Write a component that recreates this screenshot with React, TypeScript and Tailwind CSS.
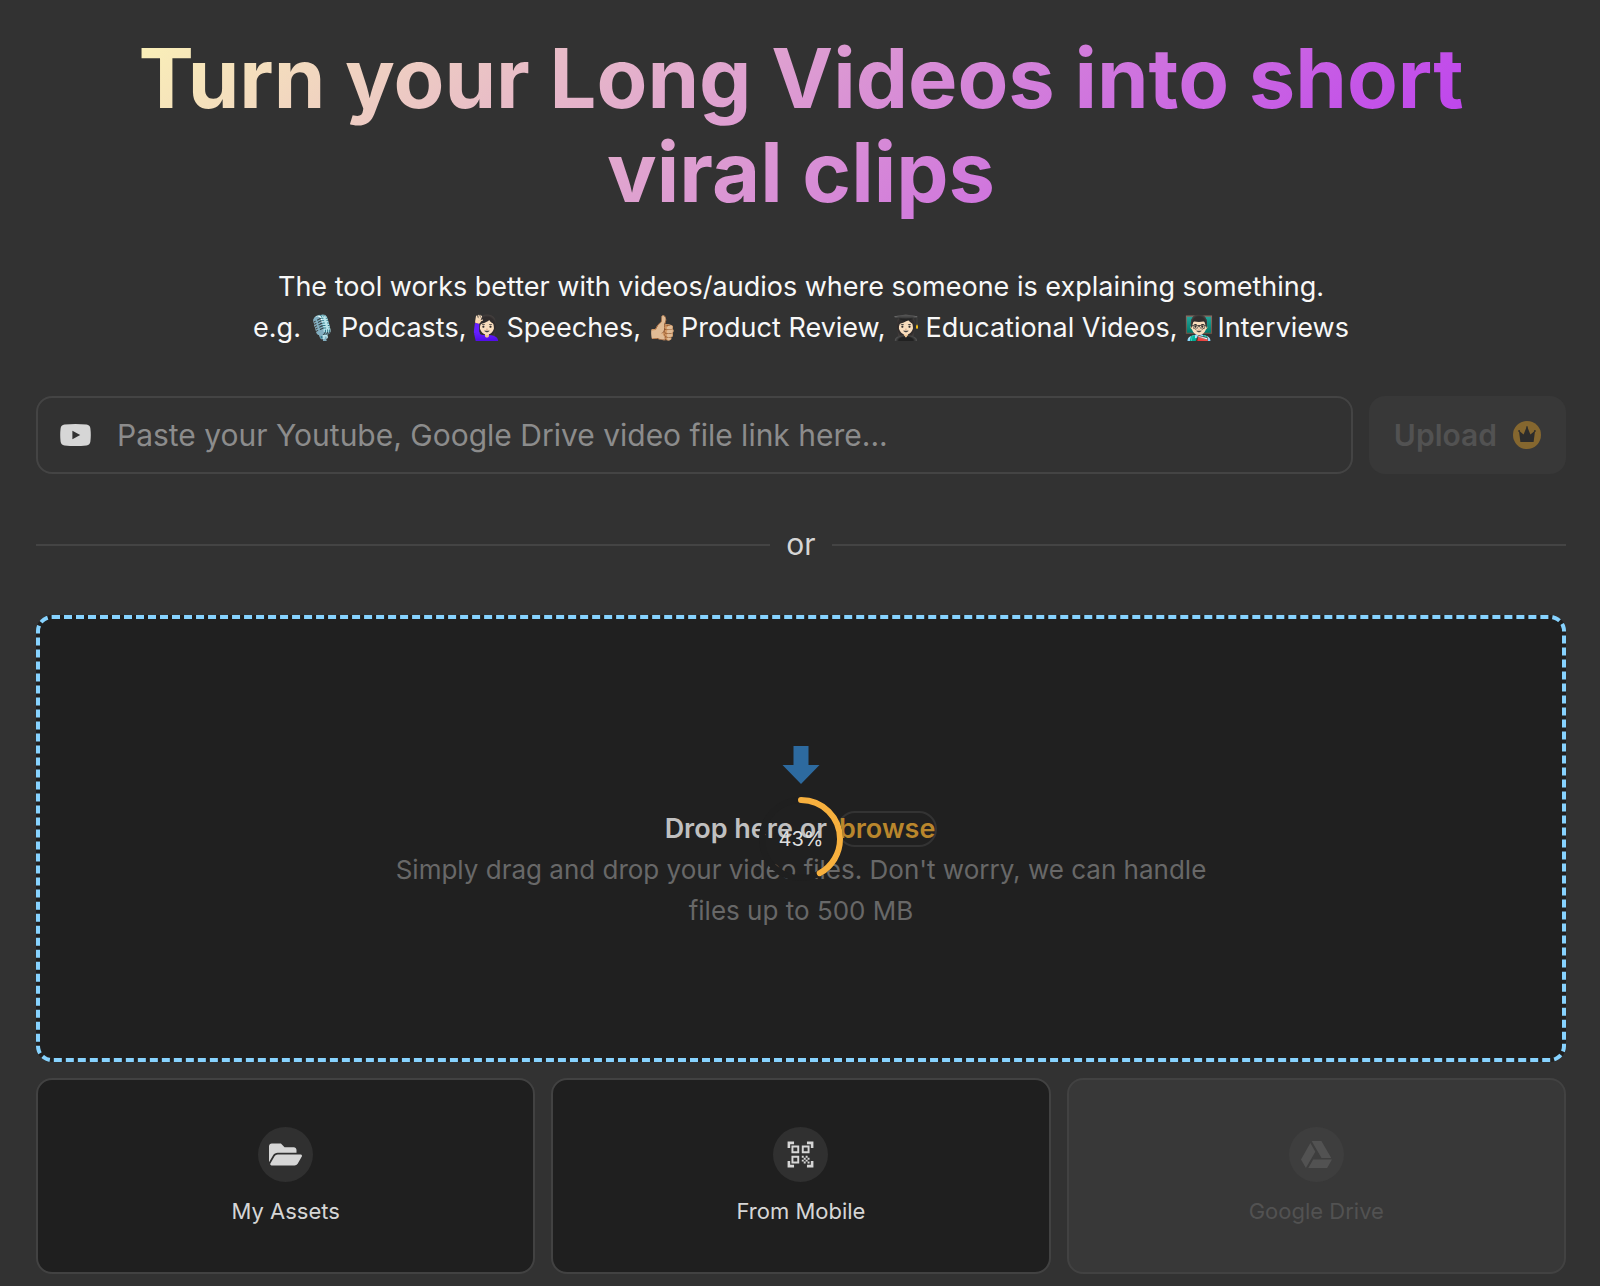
import clsx from "clsx";
import { FaFolderOpen, FaGoogleDrive } from "react-icons/fa";
import { MdQrCodeScanner } from "react-icons/md";

const examples = [
  { emoji: "🎙️", label: "Podcasts," },
  { emoji: "🙋🏻‍♀️", label: "Speeches," },
  { emoji: "👍🏼", label: "Product Review," },
  { emoji: "👩🏻‍🎓", label: "Educational Videos," },
  { emoji: "👨🏻‍🏫", label: "Interviews" },
];

const sources = [
  { title: "My Assets", icon: <FaFolderOpen size={33} />, disabled: false },
  { title: "From Mobile", icon: <MdQrCodeScanner size={31} />, disabled: false },
  { title: "Google Drive", icon: <FaGoogleDrive size={31} />, disabled: true },
];

function YoutubeIcon() {
  return (
    <svg width="31" height="22" viewBox="0 0 31 22" aria-hidden="true" className="shrink-0">
      <path
        d="M4.5.6Q15.5-.6 26.5.6Q30 1 30.4 4.5Q31.2 11 30.4 17.5Q30 21 26.5 21.4Q15.5 22.6 4.5 21.4Q1 21 .6 17.5Q-.2 11 .6 4.5Q1 1 4.5.6Z"
        fill="#d6d6d6"
      />
      <path d="M12.4 6.8L20.2 11L12.4 15.2Z" fill="#323232" />
    </svg>
  );
}

function CrownIcon() {
  return (
    <svg width="28" height="28" viewBox="0 0 28 28" aria-hidden="true">
      <circle cx="14" cy="14" r="14" fill="#85672f" />
      <path
        d="M7.4 21L6 10.2L7 10.4L10.6 13.6L13.4 6.4H14.6L17.4 13.6L21 10.4L22 10.2L20.6 21Z"
        fill="#2c2c2c"
      />
      <circle cx="14" cy="6.1" r="0.9" fill="#2c2c2c" />
      <circle cx="6.1" cy="10" r="0.9" fill="#2c2c2c" />
      <circle cx="21.9" cy="10" r="0.9" fill="#2c2c2c" />
    </svg>
  );
}

function ProgressRing({ value }: { value: number }) {
  return (
    <div
      role="progressbar"
      aria-label="Upload progress"
      aria-valuenow={value}
      className="relative flex size-[84px] items-center justify-center"
    >
      <svg viewBox="0 0 84 84" className="absolute inset-0 -rotate-90" aria-hidden="true">
        <circle cx="42" cy="42" r="39" fill="none" stroke="#1f1f1f" strokeWidth="6" />
        <circle
          cx="42"
          cy="42"
          r="39"
          fill="none"
          stroke="#f7b03e"
          strokeWidth="6"
          strokeLinecap="round"
          pathLength={100}
          strokeDasharray={`${value - 1} 100`}
        />
      </svg>
      <span className="relative text-xl text-[#dedede]">{value}%</span>
    </div>
  );
}

export default function App() {
  return (
    <main className="min-h-screen bg-[#323232] pt-[31px] pr-[34px] pb-3 pl-9 font-['Inter',sans-serif]">
      <h1 className="bg-[linear-gradient(135deg,#fffeb3,#b62cf4)] bg-clip-text px-16 text-center text-[83px] leading-[94px] font-bold text-transparent">
        Turn your Long Videos into short viral clips
      </h1>

      <div className="mt-[47px] text-center text-[27px] leading-[41px] text-[#f8f8f8]">
        <p>The tool works better with videos/audios where someone is explaining something.</p>
        <p className="flex flex-wrap justify-center gap-x-1.5">
          <span>e.g.</span>
          {examples.map((example) => (
            <span key={example.label} className="flex gap-1">
              <span className="text-2xl leading-[41px]">{example.emoji}</span>
              {example.label}
            </span>
          ))}
        </p>
      </div>

      <form className="mt-12 flex gap-4" onSubmit={(e) => e.preventDefault()}>
        <label className="flex h-[78px] flex-1 items-center gap-[26px] rounded-2xl border-2 border-[#444] px-[22px]">
          <YoutubeIcon />
          <input
            type="text"
            aria-label="Video link"
            placeholder="Paste your Youtube, Google Drive video file link here..."
            className="min-w-0 flex-1 bg-transparent text-3xl text-[#d6d6d6] outline-none placeholder:text-[#8c8c8c]"
          />
        </label>
        <button
          type="submit"
          disabled
          className="flex items-center gap-4 rounded-2xl bg-[#383838] px-[25px] text-3xl font-semibold text-[#525252]"
        >
          Upload
          <CrownIcon />
        </button>
      </form>

      <div className="my-12 flex items-center gap-4 text-3xl leading-[45px] text-[#d6d6d6]">
        <span className="h-0.5 flex-1 bg-[#444]" />
        or
        <span className="h-0.5 flex-1 bg-[#444]" />
      </div>

      <section className="relative flex h-[447px] flex-col items-center justify-center rounded-2xl border-4 border-dashed border-[#87d3ff] bg-[#202020] text-center text-[27px] leading-[41px]">
        <svg width="38" height="38" viewBox="0 0 38 38" aria-hidden="true">
          <path d="M11.5 0H26.5V19H37.5L19 38L.5 19H11.5Z" fill="#2d6a9f" />
        </svg>
        <p className="mt-6 flex items-center gap-2.5 font-semibold text-[#c0c0c0]">
          Drop here or
          <button
            type="button"
            className="rounded-full border-2 border-[#333] leading-8 text-[#b9862c]"
          >
            browse
          </button>
        </p>
        <p className="max-w-[860px] text-[26px] text-[#686868]">
          Simply drag and drop your video files. Don't worry, we can handle files up to 500 MB
        </p>
        <div className="pointer-events-none absolute inset-0 flex items-center justify-center">
          <ProgressRing value={43} />
        </div>
      </section>

      <div className="mt-4 grid grid-cols-3 gap-4">
        {sources.map((source) => (
          <button
            key={source.title}
            type="button"
            disabled={source.disabled}
            className={clsx(
              "flex h-[196px] flex-col items-center justify-center gap-[15px] rounded-2xl border-2 border-[#424242] text-[22px] leading-7",
              source.disabled ? "bg-[#383838] text-[#525252]" : "bg-[#1f1f1f] text-[#d6d6d6]"
            )}
          >
            <span
              className={clsx(
                "flex size-[55px] items-center justify-center rounded-full",
                source.disabled ? "bg-[#3e3e3e]" : "bg-[#303030]"
              )}
            >
              {source.icon}
            </span>
            {source.title}
          </button>
        ))}
      </div>
    </main>
  );
}
